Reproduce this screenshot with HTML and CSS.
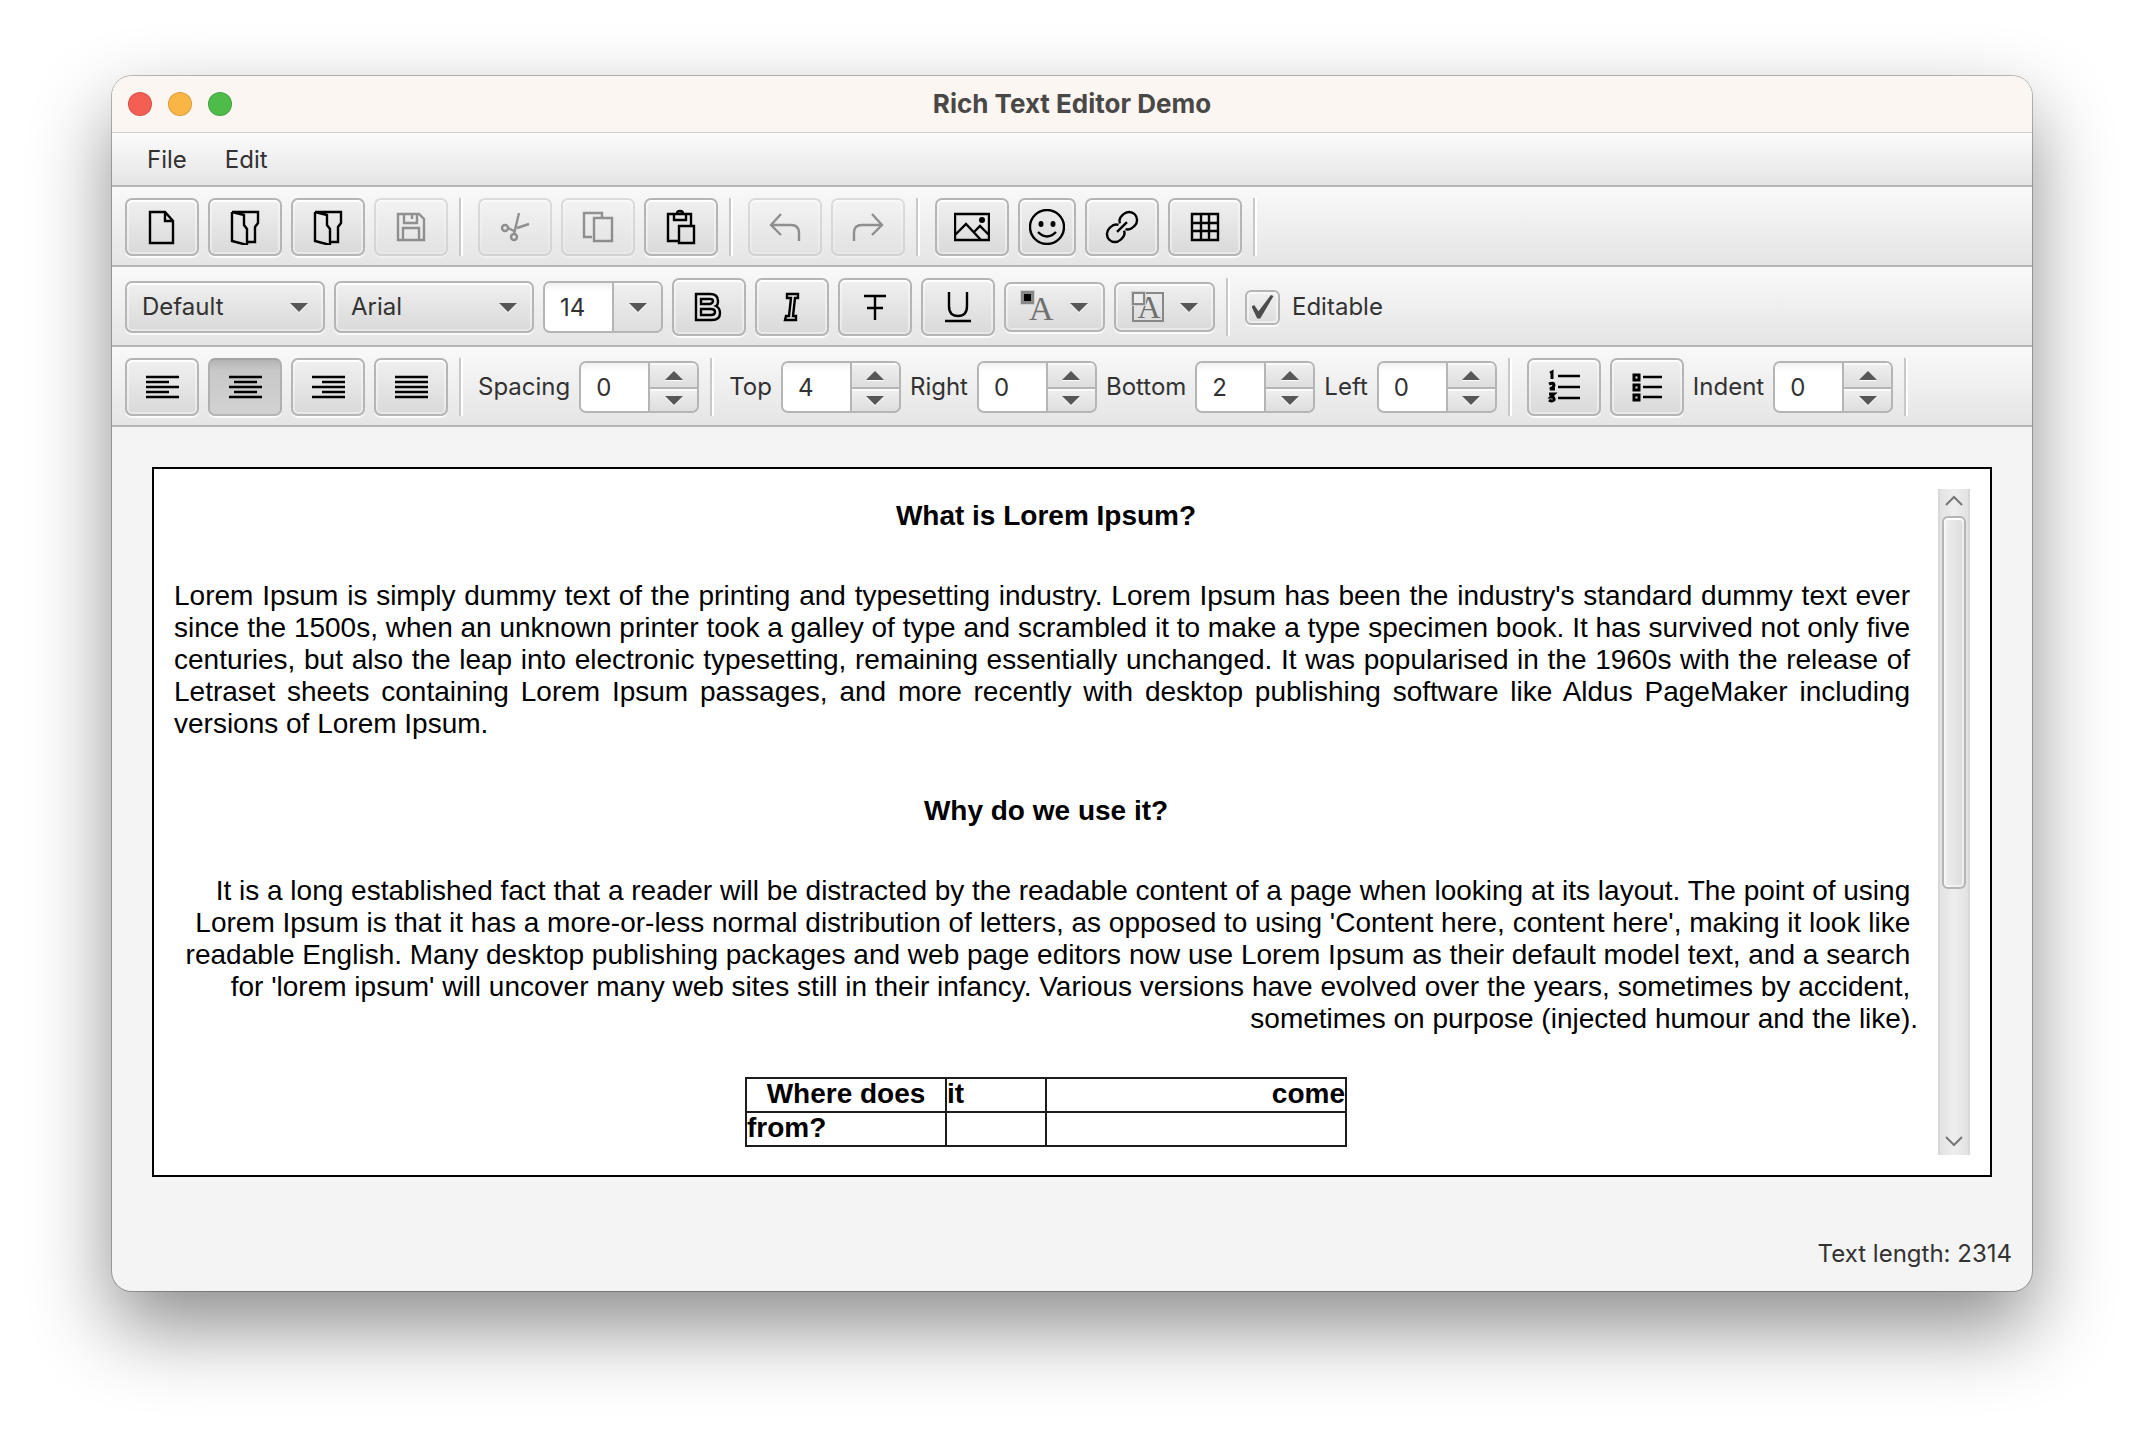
FILE: index.html
```html
<!DOCTYPE html>
<html lang="en">
<head>
<meta charset="utf-8">
<title>Rich Text Editor Demo</title>
<link rel="stylesheet" href="styles.css">
</head>
<body>
<main class="window">
  <header class="titlebar">
    <div class="lights">
      <button class="light close" type="button" aria-label="Close"></button>
      <button class="light minimize" type="button" aria-label="Minimize"></button>
      <button class="light maximize" type="button" aria-label="Zoom"></button>
    </div>
    <h1 class="title">Rich Text Editor Demo</h1>
  </header>

  <nav class="menubar">
    <button class="menu" type="button">File</button>
    <button class="menu" type="button">Edit</button>
  </nav>

  <div class="toolbar" role="toolbar" aria-label="File and insert">
    <button class="btn" type="button" aria-label="New"><svg width="36" height="36" viewBox="0 0 36 36"><path d="M6 3h15l8 9v22H6zM21 3v9h8"/></svg></button>
    <button class="btn" type="button" aria-label="Open"><svg width="36" height="36" viewBox="0 0 36 36"><path d="M5 3h26v11l-3 4v15h-8M5 3v29l15 4V20l-3-4V6L5 3"/></svg></button>
    <button class="btn" type="button" aria-label="Load"><svg width="36" height="36" viewBox="0 0 36 36"><path d="M5 3h26v11l-3 4v15h-8M5 3v29l15 4V20l-3-4V6L5 3"/></svg></button>
    <button class="btn" type="button" aria-label="Save" disabled><svg width="36" height="36" viewBox="0 0 36 36"><path d="M5 5h21l5 5v21H5zM11 5v9h13V5M19 5v5M10 31V19h16v12"/></svg></button>
    <span class="sep"></span>
    <button class="btn" type="button" aria-label="Cut" disabled><svg width="36" height="36" viewBox="0 0 36 36"><circle cx="8" cy="19" r="3"/><circle cx="17" cy="28" r="3"/><path d="M22 4l-5 21M11 19l6 3M20 19l12-4"/></svg></button>
    <button class="btn" type="button" aria-label="Copy" disabled><svg width="36" height="36" viewBox="0 0 36 36"><path d="M12 28H4V4h18v4M14 9h18v23H14z"/></svg></button>
    <button class="btn" type="button" aria-label="Paste"><svg width="36" height="36" viewBox="0 0 36 36"><path d="M16 32H5V5h23v12M11 5v6h12V5M14 5q0-3 3-3t3 3M16 17h15v17H16z"/></svg></button>
    <span class="sep"></span>
    <button class="btn" type="button" aria-label="Undo" disabled><svg width="36" height="36" viewBox="0 0 36 36"><path d="M14 5L4 16l10 10M4 16h20q8 0 8 8v8"/></svg></button>
    <button class="btn" type="button" aria-label="Redo" disabled><svg width="36" height="36" viewBox="0 0 36 36"><path d="M22 5l10 11-10 10M32 16H12q-8 0-8 8v8"/></svg></button>
    <span class="sep"></span>
    <button class="btn" type="button" aria-label="Image"><svg width="36" height="36" viewBox="0 0 36 36"><path d="M1 5h34v26H1zM1 26l11-11 15 16M20 23l6-6 9 9"/><circle class="dot" cx="28" cy="11" r="3"/></svg></button>
    <button class="btn emoji" type="button" aria-label="Emoji"><svg width="36" height="36" viewBox="0 0 36 36"><circle cx="18" cy="18" r="17"/><ellipse class="dot" cx="12" cy="15" rx="2.5" ry="3"/><ellipse class="dot" cx="24" cy="15" rx="2.5" ry="3"/><path d="M9 23q9 9 18 0"/></svg></button>
    <button class="btn" type="button" aria-label="Link"><svg width="36" height="36" viewBox="0 0 36 36"><g transform="rotate(-45 18 18)"><path d="M17 14q-2-4-7-4H8a8 8 0 0 0 0 16h2q5 0 7-4M19 14q2-4 7-4h2a8 8 0 0 1 0 16h-2q-5 0-7-4M11 18h14"/></g></svg></button>
    <button class="btn" type="button" aria-label="Table"><svg width="36" height="36" viewBox="0 0 36 36"><path d="M5 5h26v26H5zM5 14h26M5 22h26M14 5v26M22 5v26"/></svg></button>
    <span class="sep"></span>
  </div>

  <div class="toolbar" role="toolbar" aria-label="Font">
    <span class="choice"><select aria-label="Preset"><option>Default</option></select></span>
    <span class="choice"><select aria-label="Font family"><option>Arial</option></select></span>
    <span class="combo"><input type="text" value="14" aria-label="Font size"><button type="button" aria-label="Choose size"><i class="down"></i></button></span>
    <button class="btn" type="button" aria-label="Bold"><svg width="36" height="36" viewBox="0 0 36 36"><path d="M5 5h14q8 0 8 7 0 4-2 5 4 2 4 7 0 7-8 7H5zM10 10v5h9q3-1 3-3t-3-2zM10 20v6h10q4 0 4-3t-4-3z"/></svg></button>
    <button class="btn" type="button" aria-label="Italic"><svg width="36" height="36" viewBox="0 0 36 36"><path d="M13 5h11v4h-3l-2 18h3v4H11l1-4h3l2-18h-4z"/></svg></button>
    <button class="btn" type="button" aria-label="Strikethrough"><svg width="36" height="36" viewBox="0 0 36 36"><path d="M7 7h22M18 7v24M10 19h16"/></svg></button>
    <button class="btn" type="button" aria-label="Underline"><svg width="36" height="36" viewBox="0 0 36 36"><path d="M9 3v14q0 10 9 10t9-10V3M5 32h26"/></svg></button>
    <button class="btn color" type="button" aria-label="Text color"><span class="glyph"><b class="swatch ink"></b>A</span><i class="down"></i></button>
    <button class="btn color" type="button" aria-label="Background color"><span class="glyph boxed"><b class="swatch"></b>A</span><i class="down"></i></button>
    <span class="sep"></span>
    <label class="check"><input type="checkbox" checked>Editable</label>
  </div>

  <div class="toolbar" role="toolbar" aria-label="Paragraph">
    <button class="btn" type="button" aria-label="Align left"><svg width="36" height="36" viewBox="0 0 36 36"><path d="M2 8h33M2 13h23M2 18h33M2 23h23M2 28h33"/></svg></button>
    <button class="btn pressed" type="button" aria-label="Align center" aria-pressed="true"><svg width="36" height="36" viewBox="0 0 36 36"><path d="M2 8h33M7 13h23M2 18h33M7 23h23M2 28h33"/></svg></button>
    <button class="btn" type="button" aria-label="Align right"><svg width="36" height="36" viewBox="0 0 36 36"><path d="M2 8h33M12 13h23M2 18h33M12 23h23M2 28h33"/></svg></button>
    <button class="btn" type="button" aria-label="Justify"><svg width="36" height="36" viewBox="0 0 36 36"><path d="M2 8h33M2 13h33M2 18h33M2 23h33M2 28h33"/></svg></button>
    <span class="sep"></span>
    <label for="spacing">Spacing</label>
    <span class="spinner"><input id="spacing" type="text" value="0"><button type="button" aria-label="Increase spacing"><i class="up"></i></button><button type="button" aria-label="Decrease spacing"><i class="down"></i></button></span>
    <span class="sep"></span>
    <label for="top">Top</label>
    <span class="spinner"><input id="top" type="text" value="4"><button type="button" aria-label="Increase top"><i class="up"></i></button><button type="button" aria-label="Decrease top"><i class="down"></i></button></span>
    <label for="right">Right</label>
    <span class="spinner"><input id="right" type="text" value="0"><button type="button" aria-label="Increase right"><i class="up"></i></button><button type="button" aria-label="Decrease right"><i class="down"></i></button></span>
    <label for="bottom">Bottom</label>
    <span class="spinner"><input id="bottom" type="text" value="2"><button type="button" aria-label="Increase bottom"><i class="up"></i></button><button type="button" aria-label="Decrease bottom"><i class="down"></i></button></span>
    <label for="left">Left</label>
    <span class="spinner"><input id="left" type="text" value="0"><button type="button" aria-label="Increase left"><i class="up"></i></button><button type="button" aria-label="Decrease left"><i class="down"></i></button></span>
    <span class="sep"></span>
    <button class="btn" type="button" aria-label="Numbered list"><svg width="36" height="36" viewBox="0 0 36 36"><path d="M12 7h22M12 18h22M12 29h22"/><path class="heavy" d="M4 4l2-1v7M3 15q5-2 5 1 0 2-4 4h5M3 25h5l-3 3q4 0 3 3-2 2-5 0"/></svg></button>
    <button class="btn" type="button" aria-label="Bulleted list"><svg width="36" height="36" viewBox="0 0 36 36"><path d="M14 8h19M14 18h19M14 28h19"/><path class="heavy" d="M5 6h5v5H5zM5 16h5v5H5zM5 26h5v5H5z"/></svg></button>
    <label for="indent">Indent</label>
    <span class="spinner"><input id="indent" type="text" value="0"><button type="button" aria-label="Increase indent"><i class="up"></i></button><button type="button" aria-label="Decrease indent"><i class="down"></i></button></span>
    <span class="sep"></span>
  </div>

  <section class="editor">
    <article class="document" contenteditable="true" spellcheck="false">
      <h2>What is Lorem Ipsum?</h2>
      <p class="justify">Lorem Ipsum is simply dummy text of the printing and typesetting industry. Lorem Ipsum has been the industry's standard dummy text ever since the 1500s, when an unknown printer took a galley of type and scrambled it to make a type specimen book. It has survived not only five centuries, but also the leap into electronic typesetting, remaining essentially unchanged. It was popularised in the 1960s with the release of Letraset sheets containing Lorem Ipsum passages, and more recently with desktop publishing software like Aldus PageMaker including versions of Lorem Ipsum.</p>
      <h2>Why do we use it?</h2>
      <p class="flush-right">It is a long established fact that a reader will be distracted by the readable content of a page when looking at its layout. The point of using Lorem Ipsum is that it has a more-or-less normal distribution of letters, as opposed to using 'Content here, content here', making it look like readable English. Many desktop publishing packages and web page editors now use Lorem Ipsum as their default model text, and a search for 'lorem ipsum' will uncover many web sites still in their infancy. Various versions have evolved over the years, sometimes by accident, sometimes on purpose (injected humour and the like).</p>
      <table>
        <colgroup><col class="wide"><col class="narrow"><col class="widest"></colgroup>
        <tr><td class="center">Where does</td><td>it</td><td class="end">come</td></tr>
        <tr><td>from?</td><td></td><td></td></tr>
      </table>
    </article>
    <div class="scrollbar">
      <button type="button" aria-label="Scroll up"><svg width="20" height="12" viewBox="0 0 20 12"><path d="M2 10l8-8 8 8"/></svg></button>
      <div class="track"><div class="thumb"></div></div>
      <button type="button" aria-label="Scroll down"><svg width="20" height="12" viewBox="0 0 20 12"><path d="M2 2l8 8 8-8"/></svg></button>
    </div>
  </section>

  <footer class="status">Text length: 2314</footer>
</main>
</body>
</html>
```
FILE: styles.css
```css
* { box-sizing: border-box; }

body {
  margin: 0;
  padding: 76px 112px 148px;
  background: #fff;
  color: #323232;
  font: 24px/32px Inter, "Liberation Sans", sans-serif;
}

button, input, select { font: inherit; color: inherit; margin: 0; }

.window {
  display: flex;
  flex-direction: column;
  border-radius: 20px;
  overflow: hidden;
  background: #f4f4f4;
  box-shadow: 0 0 0 1px rgba(0, 0, 0, .25), 0 36px 80px rgba(0, 0, 0, .45);
}

/* Title bar */
.titlebar {
  display: grid;
  grid-template-columns: 1fr auto 1fr;
  align-items: center;
  height: 57px;
  padding: 0 16px;
  background: #fbf6f1;
  border-bottom: 1px solid #d2d0ce;
}
.lights { display: flex; gap: 16px; }
.light { width: 24px; height: 24px; padding: 0; border: 1px solid rgba(0, 0, 0, .12); border-radius: 50%; }
.close { background: #f35f53; }
.minimize { background: #f9b546; }
.maximize { background: #4dbc49; }
.title { margin: 0; font-size: 26px; line-height: 32px; font-weight: 700; color: #4a4846; }

/* Menu bar */
.menubar {
  display: flex;
  height: 54px;
  padding: 2px 16px 0;
  background: linear-gradient(#fbfbfb, #e5e5e5);
  border-bottom: 2px solid #b5b5b5;
}
.menu { padding: 0 19px; border: 0; background: none; }

/* Toolbars */
.toolbar {
  display: flex;
  align-items: center;
  gap: 9px;
  height: 80px;
  padding: 2px 13px 0;
  background: linear-gradient(#f9f9f9, #e5e5e5);
  border-bottom: 2px solid #b5b5b5;
}
.sep {
  width: 12px;
  height: 58px;
  background: linear-gradient(90deg, transparent 2px, #c8c8c8 2px 4px, #fff 4px 6px, transparent 6px);
}
.btn, .choice, .spinner, .combo {
  border: 2px solid #b5b5b5;
  border-radius: 7px;
  background: linear-gradient(#f0f0f0, #d9d9d9);
}
.btn, .choice { box-shadow: inset 0 0 0 2px rgba(255, 255, 255, .4), inset 0 2px #fff, 0 2px #fafafa; }
.btn {
  display: flex;
  align-items: center;
  justify-content: center;
  width: 74px;
  height: 58px;
  padding: 0;
}
.btn:disabled { opacity: .4; }
.btn.pressed {
  background: linear-gradient(#b4b4b4, #c8c8c8 20%, #d2d2d2);
  border-color: #a4a4a4 #b0b0b0 #b5b5b5;
  box-shadow: 0 2px #fafafa;
}
.btn.emoji { width: 58px; }
.btn svg { fill: none; stroke: #000; stroke-width: 2.4; }
.btn .heavy { stroke-width: 3; }
.btn .dot { fill: #000; stroke: none; }

.up, .down { width: 0; height: 0; border: 9px solid transparent; }
.up { border-top: 0; border-bottom-color: #575757; filter: drop-shadow(0 1px #fff); }
.down { border-bottom: 0; border-top-color: #575757; filter: drop-shadow(0 1px #fff); }

.choice { display: grid; align-items: center; width: 200px; height: 52px; }
.choice select {
  grid-area: 1 / 1;
  width: 100%;
  height: 48px;
  padding: 0 15px;
  border: 0;
  background: none;
  appearance: none;
}
.choice::after {
  content: "";
  grid-area: 1 / 1;
  justify-self: end;
  margin-right: 15px;
  border: 9px solid transparent;
  border-bottom: 0;
  border-top-color: #575757;
  filter: drop-shadow(0 1px #fff);
  pointer-events: none;
}

.combo, .spinner { display: grid; grid-template-columns: 67px 1fr; width: 120px; height: 52px; overflow: hidden; }
.spinner { grid-template-rows: 1fr 1fr; }
.spinner input { grid-row: span 2; }
.combo input, .spinner input {
  width: 100%;
  height: 48px;
  padding: 0 15px;
  border: 0;
  background: linear-gradient(#f0f0f0, #fff 8px);
}
.combo button, .spinner button {
  display: flex;
  align-items: center;
  justify-content: center;
  padding: 0;
  border: 0;
  border-left: 2px solid #b5b5b5;
  background: linear-gradient(#f0f0f0, #dedede);
  box-shadow: inset 0 2px #fafafa;
}
.spinner button + button { border-top: 2px solid #b5b5b5; }

.btn.color { width: 101px; height: 50px; gap: 16px; }
.glyph {
  position: relative;
  width: 32px;
  height: 30px;
  color: #707070;
  font: 34px/34px "Liberation Serif", serif;
  text-align: right;
}
.swatch {
  position: absolute;
  left: -1px;
  top: -1px;
  width: 13px;
  height: 13px;
  border: 2px solid #888;
  background: #ececec;
  box-shadow: 0 0 0 1px #d0d0d0;
}
.swatch.ink { background: #000; border-width: 3px; }
.boxed { border: 2px solid #888; font-size: 32px; line-height: 26px; padding-left: 3px; text-align: center; }
.boxed .swatch { left: -2px; top: -2px; }

.check { display: flex; align-items: center; gap: 12px; }
.check input {
  display: grid;
  place-items: center;
  width: 35px;
  height: 35px;
  border: 2px solid #b5b5b5;
  border-radius: 6px;
  background: linear-gradient(#f0f0f0, #dcdcdc);
  box-shadow: inset 0 0 0 2px rgba(255, 255, 255, .5), 0 2px #fafafa;
  appearance: none;
}
.check input:checked::before {
  content: "";
  width: 22px;
  height: 24px;
  background: #4c4c4c;
  clip-path: polygon(0 48%, 12% 42%, 32% 68%, 88% 0, 100% 4%, 40% 98%, 26% 98%);
}

/* Document */
.editor {
  display: flex;
  gap: 20px;
  margin: 40px;
  padding: 20px;
  border: 2px solid #000;
  background: #fff;
}
.document {
  flex: 1;
  padding: 11px 0 8px;
  color: #000;
  font: 28px/32px "Liberation Sans", Arial, sans-serif;
  outline: 0;
}
.document h2 { margin: 0 0 48px; font-size: 28px; line-height: 32px; text-align: center; }
.document p { margin: 0; }
.justify { text-align: justify; padding-right: 8px; }
.document .justify { margin-bottom: 55px; }
.flush-right { text-align: right; white-space: break-spaces; }
.document table {
  width: 602px;
  margin: 42px auto 0;
  border-collapse: collapse;
  table-layout: fixed;
  font-weight: 700;
}
.wide { width: 200px; }
.narrow { width: 100px; }
.widest { width: 300px; }
.document td { height: 34px; padding: 0 0 2px; border: 2px solid #1c1c1c; line-height: 30px; }
.center { text-align: center; }
.end { text-align: right; }

.scrollbar {
  display: flex;
  flex-direction: column;
  width: 32px;
  border: solid #d8d8d8;
  border-width: 0 2px;
  background: linear-gradient(90deg, #e2e2e2, #eee 50%, #e2e2e2);
}
.scrollbar button { display: grid; place-items: center; height: 26px; padding: 0 0 2px; border: 0; background: none; }
.scrollbar svg { fill: none; stroke: #777; stroke-width: 2; }
.track { flex: 1; padding: 1px 2px; }
.thumb {
  height: 61%;
  border: 2px solid #b5b5b5;
  border-radius: 6px;
  background: linear-gradient(90deg, #efefef, #dcdcdc);
  box-shadow: inset 0 2px #fff, inset 0 0 0 2px rgba(255, 255, 255, .5);
}

.status { display: flex; justify-content: flex-end; padding: 21px 20px; }
```
